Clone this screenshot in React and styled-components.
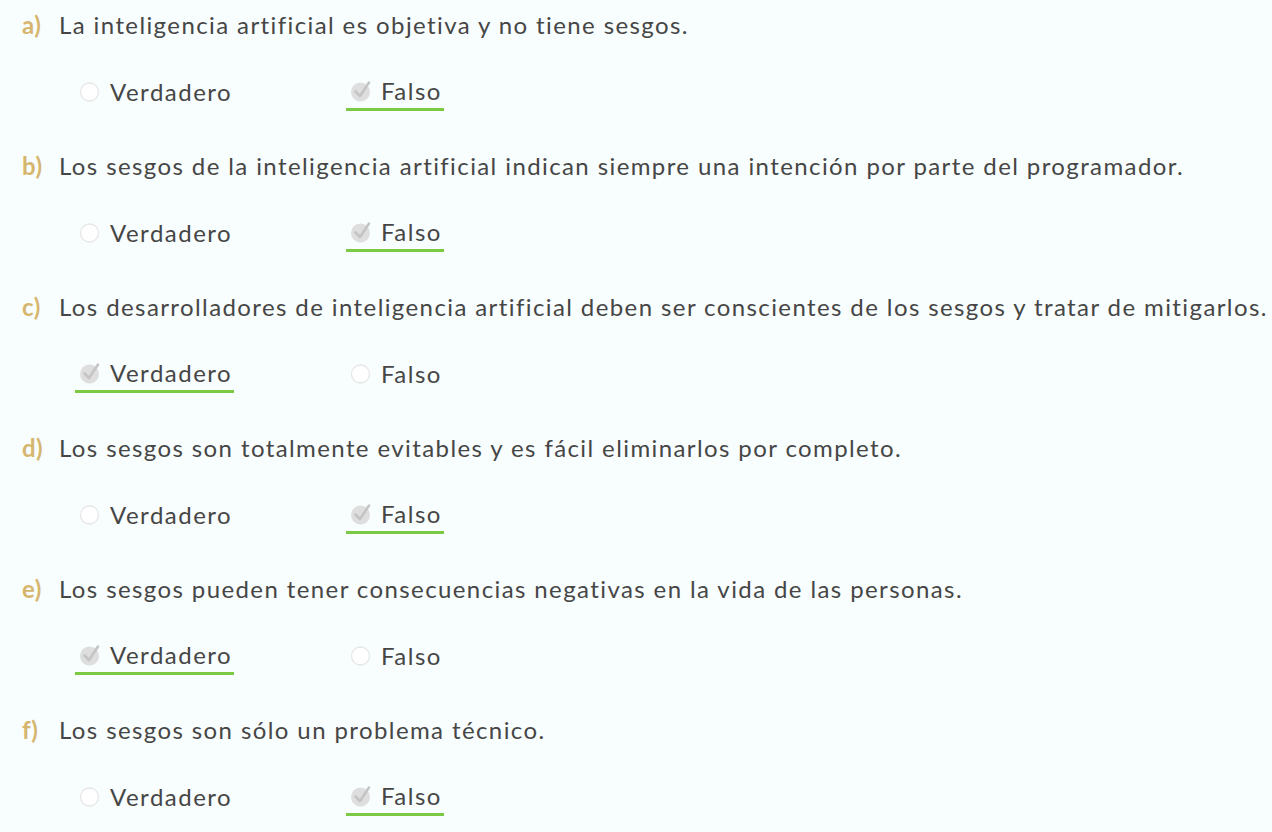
import React from "react";
import styled, { createGlobalStyle } from "styled-components";

const GlobalStyle = createGlobalStyle`
  html, body {
    margin: 0;
    padding: 0;
    background: #f8fdfd;
  }
  body {
    font-family: "Lato", "Liberation Sans", sans-serif;
    color: #464646;
    font-variant-ligatures: none;
  }
`;

const Quiz = styled.div`
  display: flex;
  flex-direction: column;
  gap: 40px;
  padding: 10px 0 40px 22px;
  min-height: 832px;
  box-sizing: border-box;
`;

const Item = styled.div`
  display: flex;
  flex-direction: column;
  gap: 36px;
`;

const Question = styled.div`
  display: flex;
  align-items: center;
  height: 28px;
  font-size: 24px;
  letter-spacing: 1.4px;
  white-space: nowrap;
`;

const Letter = styled.span`
  width: 37px;
  flex: none;
  font-weight: 700;
  letter-spacing: 0.5px;
  color: #d6b66f;
`;

const Options = styled.div`
  display: grid;
  grid-template-columns: 271px auto;
  justify-content: start;
  padding-left: 53px;
`;

const Option = styled.label`
  display: flex;
  align-items: center;
  justify-self: start;
  gap: 9px;
  height: 37px;
  box-sizing: border-box;
  padding: ${(p) => (p.$checked ? "0 2px 1px 4px" : "1px 2px 0 4px")};
  border-bottom: 3px solid ${(p) => (p.$checked ? "#7cc944" : "transparent")};
  font-size: 24px;
  letter-spacing: 1.5px;
  color: #464646;
  cursor: pointer;
`;

const Mark = styled.svg`
  flex: none;
  width: 22px;
  height: 24px;
`;

const RadioIcon = ({ checked }) =>
  checked ? (
    <Mark viewBox="0 0 22 24">
      <circle cx="10.5" cy="13" r="9.5" fill="#dedede" />
      <path
        d="M5.5 12.5 L10 17 L19 3.5"
        fill="none"
        stroke="#c4c4c4"
        strokeWidth="2.6"
        strokeLinecap="round"
        strokeLinejoin="round"
      />
    </Mark>
  ) : (
    <Mark viewBox="0 0 22 24">
      <circle cx="10.5" cy="12" r="9" fill="#fff" stroke="#e6e6e6" strokeWidth="1.3" />
    </Mark>
  );

const items = [
  { letter: "a)", text: "La inteligencia artificial es objetiva y no tiene sesgos.", answer: "Falso" },
  { letter: "b)", text: "Los sesgos de la inteligencia artificial indican siempre una intención por parte del programador.", answer: "Falso" },
  { letter: "c)", text: "Los desarrolladores de inteligencia artificial deben ser conscientes de los sesgos y tratar de mitigarlos.", answer: "Verdadero" },
  { letter: "d)", text: "Los sesgos son totalmente evitables y es fácil eliminarlos por completo.", answer: "Falso" },
  { letter: "e)", text: "Los sesgos pueden tener consecuencias negativas en la vida de las personas.", answer: "Verdadero" },
  { letter: "f)", text: "Los sesgos son sólo un problema técnico.", answer: "Falso" },
];

const choices = ["Verdadero", "Falso"];

export default function App() {
  return (
    <>
      <GlobalStyle />
      <Quiz>
        {items.map((item) => (
          <Item key={item.letter}>
            <Question>
              <Letter>{item.letter}</Letter>
              {item.text}
            </Question>
            <Options>
              {choices.map((c) => (
                <Option key={c} $checked={item.answer === c}>
                  <RadioIcon checked={item.answer === c} />
                  {c}
                </Option>
              ))}
            </Options>
          </Item>
        ))}
      </Quiz>
    </>
  );
}
